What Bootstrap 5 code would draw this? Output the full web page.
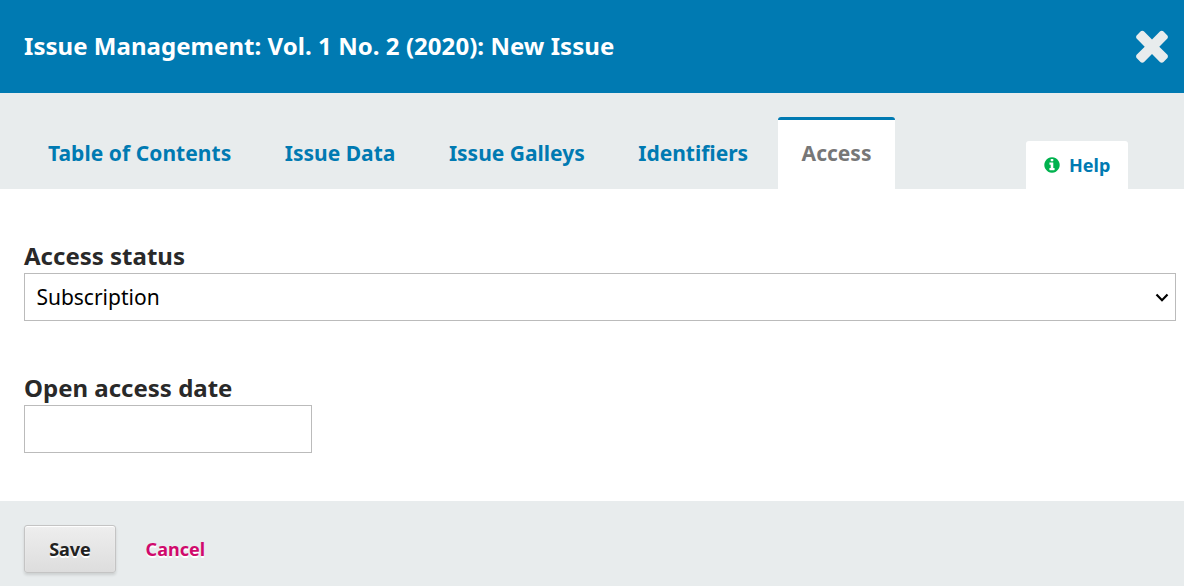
<!DOCTYPE html>
<html lang="en">
<head>
<meta charset="utf-8">
<meta name="viewport" content="width=device-width, initial-scale=1">
<title>Issue Management</title>
<link href="https://cdn.jsdelivr.net/npm/bootstrap@5.3.0/dist/css/bootstrap.min.css" rel="stylesheet">
<style>
body{font-family:"Noto Sans",sans-serif;color:#222;background:#e8eced;overflow:hidden}
.modal-bar{height:93px;background:#007ab2}
.modal-bar h1{font-size:24px;line-height:36px;font-weight:700;padding-bottom:2px;letter-spacing:.045px}
.close-btn{padding-bottom:4px}
.close-btn svg{display:block;width:48px;height:48px;fill:#e8eced}
.tab-strip{height:96px;background:#e8eced}
.tab-strip .nav-tabs{gap:5.5px}
.tab-strip .nav-link{height:72px;padding:0 24px;border:0;border-top:3px solid transparent;border-radius:3px 3px 0 0;font-size:21px;line-height:66px;font-weight:700;color:#007ab2;margin:0}
.tab-strip .nav-item:first-child .nav-link{letter-spacing:.05px}
.tab-strip .nav-link.active{color:#777;background:#fff;border-top-color:#007ab2}
.help-link{height:48px;width:102px;padding-left:17px;margin-right:56px;border-radius:3px 3px 0 0;font-size:18px;font-weight:700;color:#007ab2}
.help-link svg{width:18px;height:18px;fill:#00b24e}
.form-area{height:312px;padding:49px 8px 0 24px}
.form-area label{display:block;font-size:24px;line-height:35px;height:35px;font-weight:700;margin:0;color:#292929}
.field-group{margin-bottom:49px}
.field,.field:focus{height:48px;border:1px solid #bbb;border-radius:0;font-size:21px;color:#000;padding:0 11.4px;line-height:46px;box-shadow:none}
select.field{background-image:url("data:image/svg+xml,%3Csvg xmlns='http://www.w3.org/2000/svg' viewBox='0 0 14 10'%3E%3Cpath d='M1.5 1.5 7 7.2l5.5-5.7' fill='none' stroke='%23000' stroke-width='2.2'/%3E%3C/svg%3E");background-size:14px 10px;background-position:right 6.5px top 19px}
.date-field{width:288px}
.actions{height:85px}
.actions .btn{height:48px;font-size:18px;font-weight:700;text-shadow:0 2px 0 #fff}
.save-btn{width:92px;padding:0;color:#222;border:1px solid #c4c4c4;border-radius:3px;background:linear-gradient(#eee,#ddd);box-shadow:inset 0 1px 1px #fff,0 2px 3px rgba(0,0,0,.12)}
.cancel-btn{color:#d00a6c;padding:0;border:0;margin-left:29.6px}
</style>
</head>
<body>
<header class="modal-bar d-flex align-items-center justify-content-between ps-4 pe-2">
  <h1 class="text-white mb-0">Issue Management: Vol. 1 No. 2 (2020): New Issue</h1>
  <a class="close-btn" href="#" aria-label="Close"><svg viewBox="0 0 1792 1792"><path d="M1490 1322q0 40-28 68l-136 136q-28 28-68 28t-68-28l-294-294-294 294q-28 28-68 28t-68-28l-136-136q-28-28-28-68t28-68l294-294-294-294q-28-28-28-68t28-68l136-136q28-28 68-28t68 28l294 294 294-294q28-28 68-28t68 28l136 136q28 28 28 68t-28 68l-294 294 294 294q28 28 28 68z"/></svg></a>
</header>
<div class="tab-strip d-flex align-items-end justify-content-between ps-4">
  <ul class="nav nav-tabs border-0 flex-nowrap">
    <li class="nav-item"><a class="nav-link" href="#">Table of Contents</a></li>
    <li class="nav-item"><a class="nav-link" href="#">Issue Data</a></li>
    <li class="nav-item"><a class="nav-link" href="#">Issue Galleys</a></li>
    <li class="nav-item"><a class="nav-link" href="#">Identifiers</a></li>
    <li class="nav-item"><a class="nav-link active" href="#">Access</a></li>
  </ul>
  <a class="help-link d-flex align-items-center bg-white text-decoration-none" href="#"><svg class="me-2" viewBox="0 0 1792 1792"><path d="M1152 1376v-160q0-14-9-23t-23-9h-96v-512q0-14-9-23t-23-9h-320q-14 0-23 9t-9 23v160q0 14 9 23t23 9h96v320h-96q-14 0-23 9t-9 23v160q0 14 9 23t23 9h448q14 0 23-9t9-23zm-128-896v-160q0-14-9-23t-23-9h-192q-14 0-23 9t-9 23v160q0 14 9 23t23 9h192q14 0 23-9t9-23zm640 416q0 209-103 385.5t-279.5 279.5-385.5 103-385.5-103-279.5-279.5-103-385.5 103-385.5 279.5-279.5 385.5-103 385.5 103 279.5 279.5 103 385.5z"/></svg>Help</a>
</div>
<form>
  <div class="form-area bg-white">
    <div class="field-group">
      <label for="status">Access status</label>
      <select id="status" class="form-select field"><option>Subscription</option></select>
    </div>
    <div>
      <label for="date">Open access date</label>
      <input id="date" type="text" class="form-control field date-field">
    </div>
  </div>
  <div class="actions d-flex align-items-start px-4 pt-4">
    <button type="button" class="btn save-btn">Save</button>
    <button type="button" class="btn cancel-btn">Cancel</button>
  </div>
</form>
<script src="https://cdn.jsdelivr.net/npm/bootstrap@5.3.0/dist/js/bootstrap.bundle.min.js"></script>
</body>
</html>
